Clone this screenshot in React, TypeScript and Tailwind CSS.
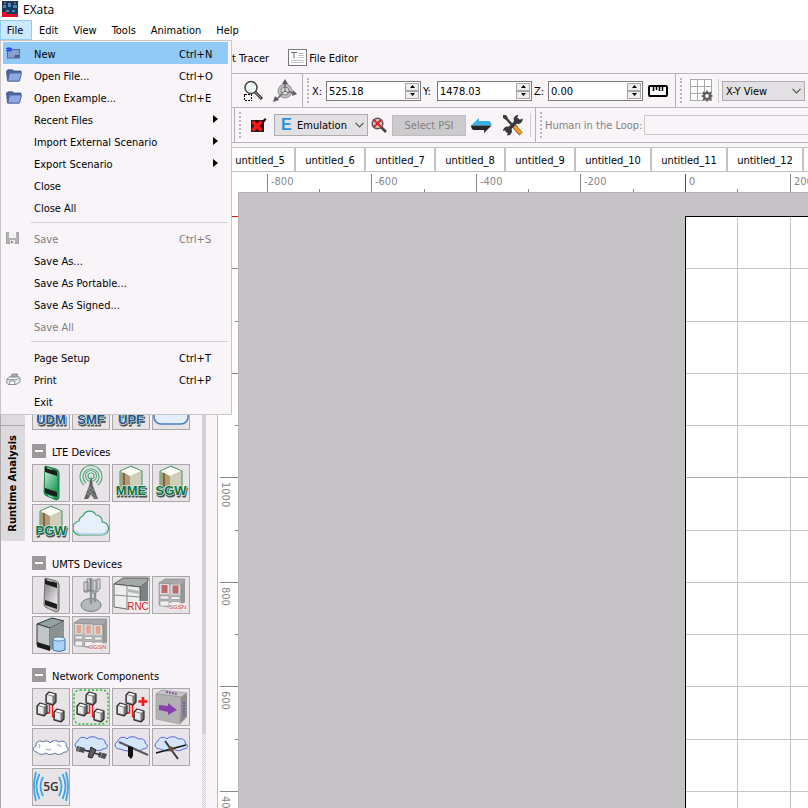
import type { ReactNode } from "react";

const H_LINES = [268, 321, 373, 425, 477, 530, 582, 634, 686, 739, 791];
const V_LINES = [737, 790];

/* ---------- small icons ---------- */

function FolderIcon() {
  return (
    <svg width="16" height="13" viewBox="0 0 16 13">
      <path d="M.5 2 2 .8h4.500L8 2h7v2L13 12H1.500Z" fill="#4e67a0" stroke="#3d5488" strokeWidth=".8" />
      <path d="M3.500 4h12L13.500 12H1.800Z" fill="#8ea9e2" stroke="#4a63a0" strokeWidth=".9" />
    </svg>
  );
}
function NewIcon() {
  return (
    <svg width="14" height="12" viewBox="0 0 14 12">
      <rect x="1.500" y="2.500" width="12" height="8.500" fill="#8a9fce" stroke="#5369a0" />
      <path d="M9 8h4v2.500H8Z" fill="#4c5878" />
      <path d="M2 0v5M4 0v5M0 1.500h6M0 3.500h6" stroke="#2250f0" />
    </svg>
  );
}
function SaveIcon() {
  return (
    <svg width="13" height="12" viewBox="0 0 13 12">
      <path d="M.5.5h12v11H.5Z" fill="#b3b2b4" stroke="#a09fa1" />
      <path d="M3 0h7v6H3Z" fill="#f4f3f4" />
      <path d="M4 8h5v4H4Z" fill="#e6e5e6" />
      <path d="M5 9h1.500v2H5Z" fill="#777" />
    </svg>
  );
}
function PrintIcon() {
  return (
    <svg width="15" height="13" viewBox="0 0 15 13" stroke="#858a8c" strokeWidth=".9">
      <path d="M1 6 4 3.500h9L14 5v4l-4 2.500H2L.7 10Z" fill="#e6e8e9" />
      <path d="m5 4 1-3h5.500L11 4Z" fill="#a9adaf" />
      <path d="m1 6.500 9 .3 4-2.300M4 8h4.500l.5 3.500H3.500Z" fill="#fff" />
    </svg>
  );
}
function AppIcon() {
  return (
    <svg width="16" height="16" viewBox="0 0 16 16">
      <path d="M0 0h16v13H0Z" fill="#153a5b" />
      <path d="M1 4h3v3H1ZM6 2h3v4H6ZM11 4h4v3h-4ZM4 9h3v2H4ZM10 9h3v2h-3Z" fill="#4a86ad" />
      <path d="M2 1h2v2H2ZM12 1h2v2h-2Z" fill="#8c5664" />
      <path d="M0 11h5v2h11v3H0Z" fill="#e5092f" />
    </svg>
  );
}
function DocIcon() {
  return (
    <svg width="19" height="17" viewBox="0 0 19 17">
      <rect x=".5" y=".5" width="18" height="16" fill="#fff" stroke="#77767a" />
      <path d="M3 3.500h6M6 3.500v6" stroke="#6d6a80" />
      <path d="M10 4.500h6M10 6.500h6M10 8.500h6M3 11.500h13M3 13.500h13" stroke="#c5c3cc" />
    </svg>
  );
}
function ZoomAreaIcon() {
  return (
    <svg width="22" height="22" viewBox="0 0 22 22">
      <path d="m13 12 7 7" stroke="#3a3a3a" strokeWidth="3" />
      <path d="m13 12 6 6" stroke="#999" strokeWidth="1" />
      <circle cx="9" cy="7.500" r="6" fill="#f0f5f5" stroke="#444" strokeWidth="1.500" />
      <path d="M5.500 6.500a4 4 0 0 1 4-3" stroke="#fff" strokeWidth="1.500" fill="none" />
      <rect x="2.500" y="14.500" width="7" height="6" fill="none" stroke="#000" strokeDasharray="2 1" shapeRendering="crispEdges" />
    </svg>
  );
}
function AxesIcon() {
  return (
    <svg width="24" height="24" viewBox="0 0 24 24">
      <circle cx="12" cy="12" r="7" fill="#bcbbbd" stroke="#909092" />
      <path d="M12 12V2M12 12l9 2M12 12l-9 9" stroke="#6b6b6e" strokeWidth="1.600" />
      <path d="m12 0 3 5H9ZM24 15l-5 2 1-6ZM0 23l2-6 4 4Z" fill="#59595c" />
      <circle cx="12" cy="12" r="4" fill="#e0dfe0" stroke="#808084" />
      <path d="M12 12V8M12 12l3 1.500M12 12l-3 2" stroke="#59595c" />
    </svg>
  );
}
function RulerIcon() {
  return (
    <svg width="20" height="12" viewBox="0 0 20 12">
      <rect x="1" y="1" width="18" height="10" rx="1" fill="#fff" stroke="#000" strokeWidth="2" />
      <path d="M5.500 1v5M8.500 1v4M11.500 1v5M14.500 1v5" stroke="#000" strokeWidth="1.500" />
    </svg>
  );
}
function GridIcon() {
  return (
    <svg width="25" height="25" viewBox="0 0 25 25">
      <rect x="1" y="1" width="22" height="22" fill="#fff" />
      <path d="M1.500 1v22M8.500 1v22M15.500 1v22M22.500 1v22M1 1.500h22M1 8.500h22M1 15.500h22M1 22.500h22" stroke="#a9a8aa" />
      <circle cx="18" cy="18" r="3" fill="none" stroke="#59595b" strokeWidth="2.200" />
      <path d="M18 12.500v3M18 20.500v3M12.500 18h3M20.500 18h3M14 14l2 2M20 20l2 2M22 14l-2 2M16 20l-2 2" stroke="#59595b" strokeWidth="1.700" />
    </svg>
  );
}
function RecordOffIcon() {
  return (
    <svg width="17" height="15" viewBox="0 0 17 15">
      <path d="M1 2h13v12H1Z" fill="#1c1c1c" />
      <path d="m11 4 4-4 1.500 1.500-4 5Z" fill="#151515" />
      <path d="m2.500 3.500 9 9M11.500 3.500l-9 9" stroke="#ff1616" strokeWidth="3.800" />
    </svg>
  );
}
function ZoomOffIcon() {
  return (
    <svg width="16" height="17" viewBox="0 0 16 17">
      <path d="m10 10 5 5" stroke="#444" strokeWidth="2.600" />
      <circle cx="6.500" cy="6.500" r="5.300" fill="#d9c5c6" stroke="#5c5455" strokeWidth="1.500" />
      <path d="m3 3 7 7M10 3l-7 7" stroke="#cf2630" strokeWidth="1.900" />
    </svg>
  );
}
function SwapIcon() {
  return (
    <svg width="21" height="15" viewBox="0 0 21 15">
      <path d="M0 7.500 8 0v3h10q2 0 2.500 4.500Z" fill="#3fb0e6" />
      <path d="M0 7.500h20.500l-7.500 7.500v-3H3q-2.500 0-3-4.500Z" fill="#22272b" />
    </svg>
  );
}
function ToolsIcon() {
  return (
    <svg width="22" height="22" viewBox="0 0 22 22">
      <path d="m2 2 10 11" stroke="#3b3b3d" strokeWidth="2.400" />
      <path d="m12 12 7 8" stroke="#8b5712" strokeWidth="4.500" />
      <path d="m12 12 7 7.500" stroke="#f2a02a" strokeWidth="3" />
      <path d="M1 1h3l2 3-2 2-3-2Z" fill="#3b3b3d" />
      <path d="M4 18 17 5" stroke="#38383a" strokeWidth="3.400" />
      <path d="M20.500 4.500 17 6l-2-2 1.500-3A4.500 4.500 0 1 0 20.500 4.500ZM1 17l3-1 2 2-1 3.500A4.500 4.500 0 1 0 1 17Z" fill="#38383a" />
    </svg>
  );
}
function Chevron() {
  return (
    <svg className="pointer-events-none absolute right-1 top-1/2 -mt-[3px]" width="9" height="6" viewBox="0 0 9 6">
      <path d="m.5.8 4 4 4-4" fill="none" stroke="#555" strokeWidth="1.200" />
    </svg>
  );
}

/* ---------- device drawings, all on a 36 x 36 grid ---------- */

function Tile({ label, children }: { label: string; children: ReactNode }) {
  return (
    <button aria-label={label} className="size-[38px] overflow-hidden border border-[#a9a7a9] bg-[#e7e3e7]">
      <svg width="36" height="36" viewBox="0 0 36 36">{children}</svg>
    </button>
  );
}

function CoreNode({ text, edge, ink, y = 30 }: { text: string; edge: string; ink: string; y?: number }) {
  return (
    <>
      <path d="M7 6 18 1l11 5v17l-11 6-11-6Z" fill="#c9c4ae" stroke={edge} />
      <path d="m8 6 10-4 10 4-11 5Z" fill="#fdfcf6" />
      <path d="m8 7 9 4v17l-9-5Z" fill="#b59b72" />
      <path d="M17 11 28 7v15l-11 6Z" fill="#d0cdb9" />
      <path d="M11 8v17" stroke="#66563c" strokeWidth="1.500" />
      <g fontSize="13" fontWeight="bold" textAnchor="middle" fontFamily="'Liberation Sans', sans-serif" strokeLinejoin="round">
        <text x="19" y={y + 1.5} fill="#4c544f" stroke="#4c544f">{text}</text>
        <text x="18" y={y} fill={ink} stroke="#dfe9e6" strokeWidth="1.500" paintOrder="stroke">{text}</text>
      </g>
    </>
  );
}

function Phone({ green = false }: { green?: boolean }) {
  return (
    <>
      <path d="M12 1 23 4q3 1 3 4v24q0 3-3 3L14 31q-3-1-3-4Z" fill={green ? "#1f9a56" : "#b5b4b6"} stroke={green ? "#17844a" : "#6c6c6f"} />
      <path d="M12 2 24 6v26l-12-4Z" fill="#1b1d1c" />
      <path d="M12 7 24 11v16l-12-4Z" fill={green ? "url(#greenScreen)" : "url(#greyScreen)"} />
      <path d="m14 3 5 1.500M15 30.500l5 2" stroke={green ? "#a8dbbd" : "#ccc"} />
    </>
  );
}

function BoxNode({ x, y }: { x: number; y: number }) {
  return (
    <g transform={`translate(${x} ${y})`} strokeLinejoin="round">
      <path d="m0 3 3-3 7 2v8l-3 3-7-2Z" fill="#77777a" stroke="#2b2b2d" strokeWidth="1.200" />
      <path d="m1 3 5.500 1.500v7L1 10Z" fill="#e9e9ea" />
      <path d="m1.500 2.300 2-1.600 5.500 1.600-2 1.500Z" fill="#fff" />
    </g>
  );
}
function Topology() {
  return (
    <>
      <path d="M16.500 14v10H12M19.500 14v13.500h4" fill="none" stroke="#f01616" strokeWidth="1.400" />
      <BoxNode x={13} y={3} />
      <BoxNode x={4} y={14} />
      <BoxNode x={21} y={20} />
    </>
  );
}

function Cabinet({ cols, accent, text }: { cols: number; accent?: string; text: string }) {
  const left = cols === 2 ? 6 : 1;
  const width = cols === 2 ? 22 : 29;
  const step = width / cols;
  return (
    <>
      <path d={`M${left} 6 ${left + 6} 2H${left + width + 4}L${left + width} 8Z`} fill="#a8a8aa" stroke="#7d7d80" strokeWidth=".6" />
      <path d={`M${left + width} 8l4-6v23l-4 8Z`} fill="#98979a" />
      <path d={`M${left} 6 ${left + width} 8v25L${left} 28Z`} fill="#b9b9bb" stroke="#8a8a8c" strokeWidth=".6" />
      {Array.from({ length: cols }, (_, i) => (
        <g key={i} transform={`translate(${left + i * step} ${7 + i * 0.5})`}>
          <path d={`M1 0h${step - 2}v10H1Z`} fill="#dcdcdd" />
          <path d={`M2.500 1h${step - 5}v8h-${step - 5}Z`} fill={accent} />
          <path d={`M1 12h${step - 2}v3H1ZM1 17h${step - 2}v5H1Z`} fill="#f0f0f0" stroke="#8a8a8c" strokeWidth=".6" />
        </g>
      ))}
      <rect x="16" y="26" width="17" height="7" fill="#f6f0f1" fillOpacity=".8" />
      <text x="24.500" y="32" fontSize="6" textAnchor="middle" fill="#d04e50" fontFamily="'Liberation Sans', sans-serif">{text}</text>
    </>
  );
}

const CLOUD = "M8 30a7 7 0 0 1-2-14 6 6 0 0 1 4-5 7 7 0 0 1 13-1 6 6 0 0 1 6 7 6.500 6.500 0 0 1 0 13Z";
const SKY = "M6 19C1 19-1 14 4 11c1-4 6-5 9-2 2-3 9-3 11 0 4-1 8 1 7 4 4 2 3 6-2 6-4 3-8 1-10 0-4 3-8 2-13 0Z";

const FIVE_G = (
  <>
    <Tile label="UDM"><CoreNode text="UDM" edge="#4a7ab0" ink="#24548e" y={31} /></Tile>
    <Tile label="SMF"><CoreNode text="SMF" edge="#4a7ab0" ink="#24548e" y={31} /></Tile>
    <Tile label="UPF"><CoreNode text="UPF" edge="#4a7ab0" ink="#24548e" y={31} /></Tile>
    <Tile label="Cloud">
      <rect x="1" y="8" width="34" height="23" rx="7" fill="#e4effb" stroke="#4a7cc0" strokeWidth="1.500" />
    </Tile>
  </>
);

const LTE = (
  <>
    <Tile label="User equipment"><Phone green /></Tile>
    <Tile label="Base station">
      <g fill="none" stroke="#55aa7c" strokeWidth="1.200">
        <circle cx="18" cy="11" r="3" />
        <circle cx="18" cy="11" r="5.500" />
        <path d="M13 18a8 8 0 1 1 10 0M11 20a11 11 0 1 1 14 0" />
      </g>
      <path d="m18 11 2 10 5 13h-4l-3-5-3 5h-4l5-13Z" fill="#5e6061" />
      <path d="m15 22 6 3-7 4 9 4M20 19l-5 6 7 6" stroke="#a3a3a3" strokeWidth=".7" fill="none" />
    </Tile>
    <Tile label="MME"><CoreNode text="MME" edge="#3d9a67" ink="#0b7340" /></Tile>
    <Tile label="SGW"><CoreNode text="SGW" edge="#3d9a67" ink="#0b7340" /></Tile>
    <Tile label="PGW"><CoreNode text="PGW" edge="#3d9a67" ink="#0b7340" /></Tile>
    <Tile label="Cloud">
      <path d={CLOUD} fill="#e7f0fa" stroke="#3aa06a" strokeWidth="1.200" />
      <path d="M3 26q2 3 6 3h20q4 0 5-4" fill="none" stroke="#b5cbe3" strokeWidth="1.500" />
    </Tile>
  </>
);

const UMTS = (
  <>
    <Tile label="Phone"><Phone /></Tile>
    <Tile label="Node B">
      <ellipse cx="18" cy="28" rx="10" ry="6.500" fill="#b4b9ba" stroke="#777b7c" />
      <path d="M18 1v26M22 4v21" stroke="#8d9192" strokeWidth="2.500" />
      <path d="M11 5h4v10h-4ZM14 2h3v11h-3ZM20 3h3v13h-3ZM24 2h3v10h-3Z" fill="#d4d8d9" stroke="#74787a" strokeWidth=".8" />
      <path d="M11 14h15" stroke="#74787a" />
    </Tile>
    <Tile label="RNC">
      <path d="M1 7 10 1h25v3l-8 6Z" fill="#a4a7a7" stroke="#444" strokeWidth=".8" />
      <path d="m27 10 8-6v22l-8 7Z" fill="#7f8282" />
      <path d="m1 7 26 3v24L1 30Z" fill="#eceeee" stroke="#444" strokeWidth=".8" />
      <path d="m1 18 26 2M14 8v23" stroke="#8a8d8d" fill="none" />
      <path d="m15 12 12 2v3l-12-2Z" fill="#b4b7b7" />
      <rect x="15" y="24" width="20" height="11" fill="#f7eeee" fillOpacity=".9" />
      <text x="25" y="33" fontSize="10" textAnchor="middle" fill="#cf2c30" fontFamily="'Liberation Sans', sans-serif">RNC</text>
    </Tile>
    <Tile label="SGSN"><Cabinet cols={2} accent="#bd6a6c" text="SGSN" /></Tile>
    <Tile label="HLR">
      <path d="m4 7 15-6 12 3-14 7Z" fill="#96a3a3" stroke="#303434" />
      <path d="m4 7 13 4v22L4 28Z" fill="#c3c6c6" stroke="#3b3f3f" />
      <path d="m17 11 14-7v23l-14 6Z" fill="#8c9192" />
      <path d="m4 25 13 4v5L4 30Z" fill="#1a1d1d" />
      <path d="M20 22v11q6 3 12 0V22Z" fill="#a9d2f4" stroke="#41759f" />
      <ellipse cx="26" cy="22" rx="6" ry="2" fill="#dcefff" stroke="#41759f" strokeWidth=".8" />
    </Tile>
    <Tile label="GGSN"><Cabinet cols={3} accent="#e0a58f" text="GGSN" /></Tile>
  </>
);

const NETWORK = (
  <>
    <Tile label="Hierarchy"><Topology /></Tile>
    <Tile label="Grouped hierarchy">
      <rect x="1" y="1" width="34" height="34" rx="6" fill="none" stroke="#1fc428" strokeWidth="1.500" strokeDasharray="2 2" />
      <Topology />
    </Tile>
    <Tile label="Add hierarchy">
      <Topology />
      <path d="M30 8v9M25.500 12.500h9" stroke="#ff1414" strokeWidth="2.600" />
    </Tile>
    <Tile label="Switch">
      <path d="M3 5 9 1l25 3-6 4Z" fill="#c6c6c6" stroke="#888" strokeWidth=".6" />
      <path d="m28 8 6-4v24l-7 7Z" fill="#8b8b8b" />
      <path d="M3 5 28 8l-1 27-24-5Z" fill="#b2b1b2" stroke="#909090" strokeWidth=".6" />
      <path d="m13 3 11 2M31 13v14" stroke="#8a55a2" strokeWidth="2" strokeDasharray="2 1" />
      <path d="m6 16 9 1v-3l9 7-9 5v-3l-9-2Z" fill="#8b3fae" />
    </Tile>
    <Tile label="Clouds">
      <path d="M4 23c-5 0-4-6-1-6-1-5 5-6 7-4 3-2 6-1 7 1 2-3 7-3 9-1 4-2 8 0 7 4 4 2 2 7-2 6-2 3-7 3-9 1-3 2-7 2-9 0-3 2-7 2-9-1Z" fill="#fff" stroke="#57739f" />
      <path d="M6 15q2 2 0 4M13 20q3 2 5 0M24 16q3-1 4 2" fill="none" stroke="#8ba0c3" />
    </Tile>
    <Tile label="Satellite">
      <g transform="translate(1 1)"><path d={SKY} fill="#d5e6fc" stroke="#5661e4" /></g>
      <path d="m4 17 8 2-1 5-8-2ZM26 23l8 2-2 5-7-2Z" fill="#4e5053" />
      <path d="m11 21 17 5" stroke="#333" strokeWidth="1.500" />
      <path d="m18 18 5 3-4 8-4-1Z" fill="#5b5d60" stroke="#242527" />
      <path d="m7 17-2 5M29 24l-2 5" stroke="#999" />
    </Tile>
    <Tile label="Satellite with antenna">
      <g transform="translate(1 1)"><path d={SKY} fill="#d5e6fc" stroke="#5661e4" /></g>
      <path d="m6 13 29 13" stroke="#57595b" strokeWidth="2" />
      <path d="m15 17 5 1v9l-2 3-3-3Z" fill="#111" />
    </Tile>
    <Tile label="Orbiter">
      <g transform="translate(1 1)"><path d={SKY} fill="#d5e6fc" stroke="#5661e4" /></g>
      <path d="m12 12 13 18" stroke="#37393b" strokeWidth="2" />
      <path d="m3 24 30-8" stroke="#151617" strokeWidth="1.800" />
      <circle cx="18" cy="20" r="2.500" fill="#6d5124" />
    </Tile>
    <Tile label="5G">
      <g fill="none" stroke="#3da6e4" strokeWidth="1.800">
        <path d="M10 8q-5 9 0 19M6.500 5q-6 12 0 25M3 3q-4 14 0 29M26 8q5 9 0 19M29.500 5q6 12 0 25M33 3q4 14 0 29" />
      </g>
      <text x="18" y="22" fontSize="12" textAnchor="middle" fill="#333" fontFamily="'Open Sans', sans-serif" fontWeight="600">5G</text>
    </Tile>
  </>
);

function Section({ title, children }: { title: string; children: ReactNode }) {
  return (
    <section>
      <div className="mb-1.5 mt-3.5 flex h-3.5 items-center gap-1.5">
        <button aria-label={title} className="flex size-3.5 items-center justify-center bg-[#9b999c]">
          <span className="h-0.5 w-2 bg-white" />
        </button>
        <h2 className="pt-1">{title}</h2>
      </div>
      <div className="flex flex-wrap gap-0.5">{children}</div>
    </section>
  );
}

/* ---------- toolbar parts ---------- */

function Grip() {
  return <span className="my-1 w-0 shrink-0 self-stretch border-l-2 border-dotted border-[#b9b6b9]" />;
}
function Divider() {
  return <span className="w-px shrink-0 self-stretch bg-[#b3b1b4]" />;
}

function Spin({ label, value }: { label: string; value: string }) {
  return (
    <label className="flex items-center">
      <span className="w-3.5 pt-0.5">{label}:</span>
      <span className="flex h-5 w-[95px] items-center border border-[#7b797c] bg-white pr-px">
        <input className="w-0 flex-1 px-0.5 pt-0.5 outline-none" defaultValue={value} />
        <span className="flex h-4 w-3.5 flex-col">
          <button aria-label={`${label} up`} className="flex h-2 items-center justify-center border border-[#a9a7a9] bg-[#efedef]">
            <svg width="5" height="3" viewBox="0 0 5 3"><path d="M0 3 2.500 0 5 3Z" /></svg>
          </button>
          <button aria-label={`${label} down`} className="flex h-2 items-center justify-center border border-[#a9a7a9] bg-[#efedef]">
            <svg width="5" height="3" viewBox="0 0 5 3"><path d="m0 0 2.500 3L5 0Z" /></svg>
          </button>
        </span>
      </span>
    </label>
  );
}

/* ---------- menu ---------- */

type Item = { text: string; keys?: string; icon?: ReactNode; sub?: boolean; off?: boolean; active?: boolean };
const MENU: Item[][] = [
  [
    { text: "New", keys: "Ctrl+N", icon: <NewIcon />, active: true },
    { text: "Open File...", keys: "Ctrl+O", icon: <FolderIcon /> },
    { text: "Open Example...", keys: "Ctrl+E", icon: <FolderIcon /> },
    { text: "Recent Files", sub: true },
    { text: "Import External Scenario", sub: true },
    { text: "Export Scenario", sub: true },
    { text: "Close" },
    { text: "Close All" },
  ],
  [
    { text: "Save", keys: "Ctrl+S", icon: <SaveIcon />, off: true },
    { text: "Save As..." },
    { text: "Save As Portable..." },
    { text: "Save As Signed..." },
    { text: "Save All", off: true },
  ],
  [
    { text: "Page Setup", keys: "Ctrl+T" },
    { text: "Print", keys: "Ctrl+P", icon: <PrintIcon /> },
    { text: "Exit" },
  ],
];

function FileMenu() {
  return (
    <div className="absolute left-0 top-10 z-10 w-[232px] border border-[#c9c6c9] bg-[#f8f4f8] px-0.5 pb-0.5 pt-px">
      {MENU.map((group, g) => (
        <div key={g}>
          {g > 0 && <div className="ml-7 mr-px flex h-[9px] items-center"><span className="h-px w-full bg-[#d3d0d3]" /></div>}
          {group.map((item) => (
            <button
              key={item.text}
              disabled={item.off}
              className={`flex h-[22px] w-[225px] items-center text-left ${item.active ? "bg-[#91c9f7]" : ""} ${item.off ? "text-[#7f7d80]" : ""}`}
            >
              <span className="flex w-[31px] items-center pl-[3px]">{item.icon}</span>
              <span className="flex-1 pt-1">{item.text}</span>
              {item.keys && <span className="w-[49px] pt-1">{item.keys}</span>}
              {item.sub && (
                <svg className="mr-2.5" width="5" height="8" viewBox="0 0 5 8"><path d="m0 0 5 4-5 4Z" /></svg>
              )}
            </button>
          ))}
        </div>
      ))}
    </div>
  );
}

/* ---------- canvas ---------- */

const TOP_TICKS = [267, 319, 371, 424, 476, 528, 580, 633, 685, 737, 790];
const TOP_LABELS = ["-800", "-600", "-400", "-200", "0", "200"];
const SIDE_LABELS: Record<number, string> = { 477: "1000", 582: "800", 686: "600", 791: "400" };

function Canvas() {
  return (
    <div className="min-h-0 flex-1 overflow-hidden bg-white">
      <svg className="block size-full" shapeRendering="crispEdges">
        <g transform="translate(-218 -172)" fill="#88868a">
          <rect x="238" y="192" width="100%" height="100%" fill="#c5c3c6" />
          <path d="M238 192H2400v1H239V1900h-1Z" fill="#b3b1b4" />
          <rect x="685" y="216" width="100%" height="100%" fill="#fff" />
          {H_LINES.map((y) => (
            <rect key={y} x="685" y={y} width="100%" height="1" fill={y === 477 ? "#aaa8ab" : "#c6c4c7"} />
          ))}
          {V_LINES.map((x) => (
            <rect key={x} x={x} y="216" width="1" height="100%" fill="#c6c4c7" />
          ))}
          <rect x="685" y="216" width="100%" height="1" fill="#000" />
          <rect x="685" y="216" width="1" height="100%" fill="#000" />
          {TOP_TICKS.map((x, i) => (
            <g key={x}>
              <rect x={x} y={i % 2 ? 189 : 174} width="1" height={i % 2 ? 3 : 18} fill={x === 685 ? "#e01010" : "#88868a"} />
              {i % 2 === 0 && <text x={x + 4} y="185">{TOP_LABELS[i / 2]}</text>}
            </g>
          ))}
          <rect x="220" y="216" width="18" height="1" fill="#f01010" />
          {H_LINES.map((y, i) => (
            <g key={y}>
              <rect x={i % 2 ? 235 : 220} y={y} width={i % 2 ? 3 : 18} height="1" />
              {SIDE_LABELS[y] && <text transform={`translate(222 ${y + 5}) rotate(90)`}>{SIDE_LABELS[y]}</text>}
            </g>
          ))}
        </g>
      </svg>
    </div>
  );
}

const NARROW_TABS = ["untitled_5", "untitled_6", "untitled_7", "untitled_8", "untitled_9"];
const WIDE_TABS = ["untitled_10", "untitled_11", "untitled_12"];

export default function App() {
  return (
    <div className="relative flex h-screen flex-col overflow-hidden bg-[#f8f4f8] font-['DejaVu_Sans_Condensed','DejaVu_Sans',sans-serif] text-[11px] leading-[14px] text-black">
      <svg className="absolute" width="0" height="0" aria-hidden="true">
        <defs>
          <linearGradient id="greenScreen" x2="1" y2="1"><stop stopColor="#b9e4cd" /><stop offset="1" stopColor="#159653" /></linearGradient>
          <linearGradient id="greyScreen" x2="1" y2="1"><stop stopColor="#88868a" /><stop offset="1" stopColor="#f0eef0" /></linearGradient>
        </defs>
      </svg>

      <header className="shrink-0 bg-white">
        <div className="flex h-5 items-center gap-[5px] px-0.5 pb-0.5 font-['Open_Sans',sans-serif] text-xs">
          <AppIcon />
          <h1 className="pt-0.5">EXata</h1>
        </div>
        <nav className="flex h-5 items-center gap-[15px]">
          <button className="-mr-2 h-5 w-8 border border-[#91c9f7] bg-[#cce8ff] pr-0.5 pt-0.5">File</button>
          <button className="pt-0.5">Edit</button>
          <button className="pt-0.5">View</button>
          <button className="pt-0.5">Tools</button>
          <button className="pt-0.5">Animation</button>
          <button className="pt-0.5">Help</button>
        </nav>
      </header>
      <FileMenu />

      <div className="flex h-[34px] shrink-0 items-center border-b border-[#b9b6b9] pl-[232px] pt-0.5">
        <button className="pt-0.5">t Tracer</button>
        <button className="ml-[19px] flex items-center gap-0.5"><DocIcon /><span className="pt-0.5">File Editor</span></button>
      </div>

      <div className="flex h-[34px] shrink-0 items-center border-b border-[#b9b6b9] pl-[242px] pr-[3px]">
        <button aria-label="Zoom to area"><ZoomAreaIcon /></button>
        <button aria-label="Axes" className="ml-[9px] mr-[5px]"><AxesIcon /></button>
        <Divider />
        <span className="w-1" />
        <Grip />
        <div className="ml-[3px] flex gap-0.5">
          <Spin label="X" value="525.18" />
          <Spin label="Y" value="1478.03" />
          <Spin label="Z" value="0.00" />
        </div>
        <button aria-label="Measure" className="ml-[5px] mr-[7px]"><RulerIcon /></button>
        <Divider />
        <span className="w-1" />
        <Grip />
        <button aria-label="Grid settings" className="ml-[7px] mr-1"><GridIcon /></button>
        <span className="h-6 w-px bg-[#d0cdd0]" />
        <div className="relative ml-[3px] h-5 min-w-0 flex-1">
          <select aria-label="View" className="size-full appearance-none border border-[#adabad] bg-[#e2e0e2] pl-[3px] pt-0.5"><option>X-Y View</option></select>
          <Chevron />
        </div>
      </div>

      <div className="flex h-[35px] shrink-0 items-center border-b border-[#b9b6b9] pl-[234px]">
        <Divider />
        <span className="w-1" />
        <Grip />
        <button aria-label="Stop recording" className="ml-[9px] mr-[7px]"><RecordOffIcon /></button>
        <div className="relative h-[22px] w-[94px] shrink-0">
          <span className="pointer-events-none absolute left-[7px] top-[3px] font-['Liberation_Sans',sans-serif] text-base leading-none font-bold text-[#2a92dc]">E</span>
          <select aria-label="Mode" className="size-full appearance-none border border-[#adabad] bg-[#e2e0e2] pl-[22px] pt-0.5"><option>Emulation</option></select>
          <Chevron />
        </div>
        <button aria-label="Clear search" className="ml-[3px] mr-[5px]"><ZoomOffIcon /></button>
        <button disabled className="h-[21px] w-[74px] shrink-0 border border-[#bfbdbf] bg-[#cccacc] pt-0.5 text-[#838184]">Select PSI</button>
        <button aria-label="Transfer" className="ml-[5px] mr-2.5"><SwapIcon /></button>
        <button aria-label="Tools" className="mr-1.5"><ToolsIcon /></button>
        <span className="mr-1 h-6 w-px bg-[#d0cdd0]" />
        <Divider />
        <span className="w-1" />
        <Grip />
        <label className="ml-[3px] flex min-w-0 flex-1 items-center gap-0.5 text-[#838184]">
          <span className="whitespace-nowrap pt-0.5">Human in the Loop:</span>
          <input disabled className="h-5 w-0 flex-1 border border-r-0 border-[#cbc8cb] bg-[#f8f4f8]" />
        </label>
      </div>

      <div className="flex min-h-0 flex-1">
        <aside className="flex w-[25px] shrink-0 flex-col border-l border-[#a9a7a9]">
          <div className="h-[283px] shrink-0 border-b border-[#a9a7a9] bg-[#dcdadc]" />
          <button className="flex h-[115px] items-center justify-center bg-[#dcdadc] font-bold">
            <span className="rotate-180 [writing-mode:vertical-rl]">Runtime Analysis</span>
          </button>
        </aside>

        <div className="flex w-[181px] shrink-0 overflow-hidden">
          <div className="w-[177px] pl-[7px] pr-3">
            <div className="flex gap-0.5 pt-[249px]">{FIVE_G}</div>
            <Section title="LTE Devices">{LTE}</Section>
            <Section title="UMTS Devices">{UMTS}</Section>
            <Section title="Network Components">{NETWORK}</Section>
          </div>
          <div className="w-1 bg-[repeating-conic-gradient(#cfccd0_0_25%,#fbf9fb_0_50%)] bg-[length:2px_2px]">
            <div className="h-[591px] bg-[#d3d0d3]" />
          </div>
        </div>

        <main className="ml-[11px] flex min-w-0 flex-1 flex-col border-l border-[#bdbbbd]">
          <div className="mt-1 flex h-[25px] shrink-0 overflow-hidden border-y border-[#c3c1c3] bg-white">
            <span className="w-2 shrink-0 border-r-2 border-[#c3c1c3]" />
            {NARROW_TABS.map((t) => (
              <button key={t} className="w-[70px] shrink-0 border-r-2 border-[#c3c1c3] pt-0.5">{t}</button>
            ))}
            {WIDE_TABS.map((t) => (
              <button key={t} className="w-[76px] shrink-0 border-r-2 border-[#c3c1c3] pt-0.5">{t}</button>
            ))}
          </div>
          <Canvas />
        </main>
      </div>
    </div>
  );
}
